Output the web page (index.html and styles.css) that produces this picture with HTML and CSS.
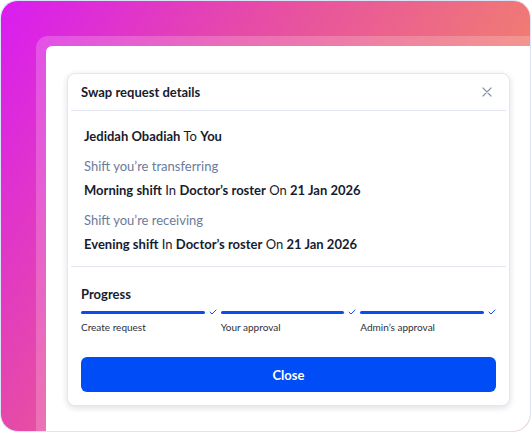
FILE: index.html
```html
<!DOCTYPE html>
<html lang="en">
<head>
  <meta charset="UTF-8">
  <meta name="viewport" content="width=device-width, initial-scale=1.0">
  <title>Swap request details</title>
  <link rel="stylesheet" href="styles.css">
</head>
<body>

  <div class="frame">
    <div class="window-edge">
      <div class="window">

        <!-- Modal -->
        <div class="modal">
          <div class="modal-header">
            <h2>Swap request details</h2>
            <button class="icon-close" aria-label="Close">
              <svg width="10" height="10" viewBox="0 0 10 10">
                <path d="M1 1L9 9M9 1L1 9" stroke="#8a94a8" stroke-width="1.2" stroke-linecap="round"/>
              </svg>
            </button>
          </div>

          <div class="details">
            <p class="value"><b>Jedidah Obadiah</b> To <b>You</b></p>

            <div class="group">
              <p class="label">Shift you’re transferring</p>
              <p class="value"><b>Morning shift</b> In <b>Doctor’s roster</b> On <b>21 Jan 2026</b></p>
            </div>

            <div class="group">
              <p class="label">Shift you’re receiving</p>
              <p class="value"><b>Evening shift</b> In <b>Doctor’s roster</b> On <b>21 Jan 2026</b></p>
            </div>
          </div>

          <div class="progress">
            <h3>Progress</h3>
            <div class="steps">
              <div class="step">
                <div class="track">
                  <span class="bar"></span>
                  <svg class="check" width="8" height="6" viewBox="0 0 8 6">
                    <path d="M1 3.2L3 5L7 1" fill="none" stroke="#0a4cf2" stroke-width="1" stroke-linecap="round" stroke-linejoin="round"/>
                  </svg>
                </div>
                <span class="step-name">Create request</span>
              </div>
              <div class="step">
                <div class="track">
                  <span class="bar"></span>
                  <svg class="check" width="8" height="6" viewBox="0 0 8 6">
                    <path d="M1 3.2L3 5L7 1" fill="none" stroke="#0a4cf2" stroke-width="1" stroke-linecap="round" stroke-linejoin="round"/>
                  </svg>
                </div>
                <span class="step-name">Your approval</span>
              </div>
              <div class="step">
                <div class="track">
                  <span class="bar"></span>
                  <svg class="check" width="8" height="6" viewBox="0 0 8 6">
                    <path d="M1 3.2L3 5L7 1" fill="none" stroke="#0a4cf2" stroke-width="1" stroke-linecap="round" stroke-linejoin="round"/>
                  </svg>
                </div>
                <span class="step-name">Admin’s approval</span>
              </div>
            </div>

            <button class="close-btn">Close</button>
          </div>
        </div>

      </div>
    </div>
  </div>

</body>
</html>
```

FILE: styles.css
```css
* {
  box-sizing: border-box;
}

body {
  margin: 0;
  font-family: Lato, "Open Sans", sans-serif;
  background-color: #ffffff;
  color: #171c2e;
}

p, h2, h3 {
  margin: 0;
}

.frame {
  width: 531px;
  height: 432px;
  padding: 35px 0 0 35px;
  border: 1px solid #dbe4f6;
  border-radius: 18px;
  overflow: hidden;
  background: linear-gradient(120deg, #d91cf2 0%, #e64aa8 33%, #f07a74 70%, #f5886a 100%);
}

.window-edge {
  height: 100%;
  padding: 10px 0 0 10px;
  border-top-left-radius: 12px;
  background-color: rgba(255, 255, 255, 0.2);
}

.window {
  height: 100%;
  padding: 27px 0 0 21px;
  border-top-left-radius: 6px;
  background-color: #ffffff;
}

.modal {
  width: 443px;
  border: 1px solid #e2e7f0;
  border-radius: 8px;
  background-color: #ffffff;
  box-shadow: 0 2px 6px rgba(20, 30, 60, 0.14);
}

.modal-header {
  display: flex;
  align-items: center;
  justify-content: space-between;
  height: 37px;
  padding: 0 14px 0 13px;
  margin: 0 3px;
  border-bottom: 1px solid #e2e7f0;
}

.modal-header h2 {
  margin-left: -3px;
  font-size: 13px;
  font-weight: 700;
}

.icon-close {
  display: flex;
  padding: 0;
  border: none;
  background: none;
  cursor: pointer;
}

.details {
  display: flex;
  flex-direction: column;
  gap: 12px;
  padding: 16px 13px 13px;
  margin: 0 3px;
  border-bottom: 1px solid #e2e7f0;
}

.group {
  display: flex;
  flex-direction: column;
  gap: 6px;
}

.label,
.value {
  font-size: 13px;
  line-height: 18px;
}

.label {
  color: #6b7b99;
}

.value b {
  font-weight: 700;
}

.progress {
  padding: 18px 13px 13px;
}

.progress h3 {
  font-size: 13px;
  line-height: 18px;
  font-weight: 700;
}

.steps {
  display: grid;
  grid-template-columns: repeat(3, 1fr);
  gap: 4px;
  margin-top: 5px;
}

.track {
  display: flex;
  align-items: center;
  gap: 4px;
  height: 8px;
}

.bar {
  flex: 1;
  height: 3px;
  border-radius: 2px;
  background-color: #0a4cf2;
}

.step-name {
  display: block;
  margin-top: 4px;
  font-size: 10px;
  line-height: 14px;
  color: #2b2f3a;
}

.close-btn {
  width: 100%;
  height: 35px;
  margin-top: 23px;
  border: none;
  border-radius: 6px;
  background-color: #004cf7;
  color: #ffffff;
  font-family: inherit;
  font-size: 13px;
  font-weight: 700;
  cursor: pointer;
}
```
